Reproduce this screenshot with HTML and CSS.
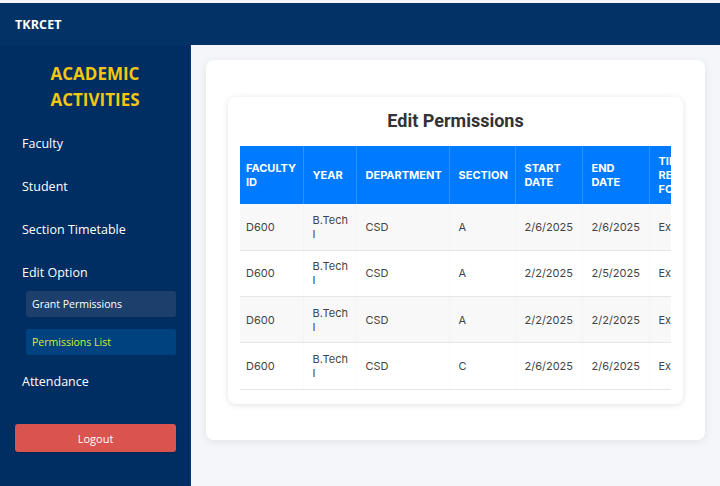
FILE: index.html
```html
<!DOCTYPE html>
<html>
<head>
<meta charset="utf-8">
<link rel="stylesheet" href="styles.css">
</head>
<body>
<div class="page">
  <header class="navbar"><span class="logo">TKRCET</span></header>
  <div class="layout">
    <aside class="sidebar">
      <div class="brand">ACADEMIC<br>ACTIVITIES</div>
      <nav class="menu">
        <div class="item">Faculty</div>
        <div class="item">Student</div>
        <div class="item">Section Timetable</div>
        <div class="item item-parent">Edit Option</div>
        <div class="submenu">
          <div class="sub">Grant Permissions</div>
          <div class="sub sub-active">Permissions List</div>
        </div>
        <div class="item">Attendance</div>
      </nav>
      <button class="logout">Logout</button>
    </aside>
    <main class="main">
      <section class="card">
        <div class="inner">
          <h2 class="title">Edit Permissions</h2>
          <div class="table-wrap">
            <table class="grid">
              <colgroup>
                <col class="c1"><col class="c2"><col class="c3"><col class="c4"><col class="c5"><col class="c6"><col class="c7"><col class="c8">
              </colgroup>
              <thead>
                <tr><th>Faculty ID</th><th>Year</th><th>Department</th><th>Section</th><th>Start Date</th><th>End Date</th><th>Time Requested For</th><th>Actions</th></tr>
              </thead>
              <tbody>
                <tr><td>D600</td><td>B.Tech I</td><td>CSD</td><td>A</td><td>2/6/2025</td><td>2/6/2025</td><td>Exam Duty</td><td>Edit</td></tr>
                <tr><td>D600</td><td>B.Tech I</td><td>CSD</td><td>A</td><td>2/2/2025</td><td>2/5/2025</td><td>Exam Duty</td><td>Edit</td></tr>
                <tr><td>D600</td><td>B.Tech I</td><td>CSD</td><td>A</td><td>2/2/2025</td><td>2/2/2025</td><td>Exam Duty</td><td>Edit</td></tr>
                <tr><td>D600</td><td>B.Tech I</td><td>CSD</td><td>C</td><td>2/6/2025</td><td>2/6/2025</td><td>Exam Duty</td><td>Edit</td></tr>
              </tbody>
            </table>
          </div>
        </div>
      </section>
    </main>
  </div>
</div>
</body>
</html>
```
FILE: styles.css
```css
* { box-sizing: border-box; }
html, body { margin: 0; padding: 0; }
body {
  background: #f4f6f9;
  font-family: "Open Sans", "Liberation Sans", sans-serif;
  height: 486px;
  overflow: hidden;
}
.page { padding-top: 3px; height: 486px; display: flex; flex-direction: column; }
.navbar {
  height: 42px;
  background: #033366;
  display: flex;
  align-items: center;
  padding-left: 15px;
  flex-shrink: 0;
}
.logo { color: #fff; font-weight: 700; font-size: 12.5px; letter-spacing: 0.1px; }
.layout { display: flex; flex: 1; min-height: 0; }
.sidebar {
  width: 191px;
  flex-shrink: 0;
  background: #002d62;
  border-right: 1px solid #0d3a6e;
  padding: 16px 14px 0 15px;
  display: flex;
  flex-direction: column;
}
.brand {
  color: #f3c711;
  font-weight: 700;
  font-size: 17px;
  line-height: 26px;
  text-align: center;
  padding-right: 1px;
}
.menu { margin-top: 10px; display: flex; flex-direction: column; }
.item {
  color: #fff;
  font-size: 12.5px;
  line-height: 20px;
  padding: 11px 7px 12px;
}
.item-parent { padding-bottom: 0; }
.submenu { margin: 8px 0 6px 11px; display: flex; flex-direction: column; gap: 12px; }
.sub {
  height: 26px;
  line-height: 26px;
  padding-left: 6px;
  font-size: 10.5px;
  color: #fff;
  background: #1d3f6b;
  border-radius: 2px;
}
.sub-active { background: #00417f; color: #d6ef2d; }
.logout {
  margin-top: 20px;
  height: 28px;
  width: 161px;
  border: none;
  border-radius: 3px;
  background: #d9534f;
  color: #fff;
  font-family: inherit;
  font-size: 11px;
  box-shadow: 0 1px 2px rgba(0,0,0,0.2);
}
.main { flex: 1; min-width: 0; padding: 15px 15px 0 15px; }
.card {
  background: #fff;
  border-radius: 8px;
  box-shadow: 0 2px 8px rgba(0,0,0,0.08);
  padding: 37px 22px 36px;
}
.inner {
  background: #fff;
  border-radius: 8px;
  box-shadow: 0 1px 6px rgba(0,0,0,0.12);
  padding: 13px 12px 14px;
}
.title {
  margin: 0 0 14px;
  text-align: center;
  font-family: Roboto, "Liberation Sans", sans-serif;
  font-size: 18px;
  line-height: 22px;
  font-weight: 700;
  color: #333;
}
.table-wrap { overflow: hidden; width: 100%; }
.grid {
  border-collapse: collapse;
  table-layout: fixed;
  width: 560px;
  font-family: Inter, "Liberation Sans", sans-serif;
  font-size: 11px;
}
.c1 { width: 63px; } .c2 { width: 53px; } .c3 { width: 93px; } .c4 { width: 66px; }
.c5 { width: 67px; } .c6 { width: 67px; } .c7 { width: 80px; } .c8 { width: 71px; }
.grid th {
  background: #007bff;
  color: #fff;
  font-weight: 700;
  text-transform: uppercase;
  text-align: left;
  line-height: 14px;
  height: 58px;
  padding: 0 8px 0 9px;
  border-right: 1px solid rgba(255,255,255,0.18);
}
.grid th:first-child, .grid td:first-child { padding-left: 6px; }
.grid td {
  color: #444;
  line-height: 14px;
  height: 46.25px;
  padding: 0 8px 0 9px;
  border-bottom: 1px solid #e6e6e6;
  border-right: 1px solid rgba(0,0,0,0.015);
}
.grid tbody tr:nth-child(odd) td { background: #f8f8f8; }
.grid tbody tr:nth-child(even) td { background: #fff; }
```
